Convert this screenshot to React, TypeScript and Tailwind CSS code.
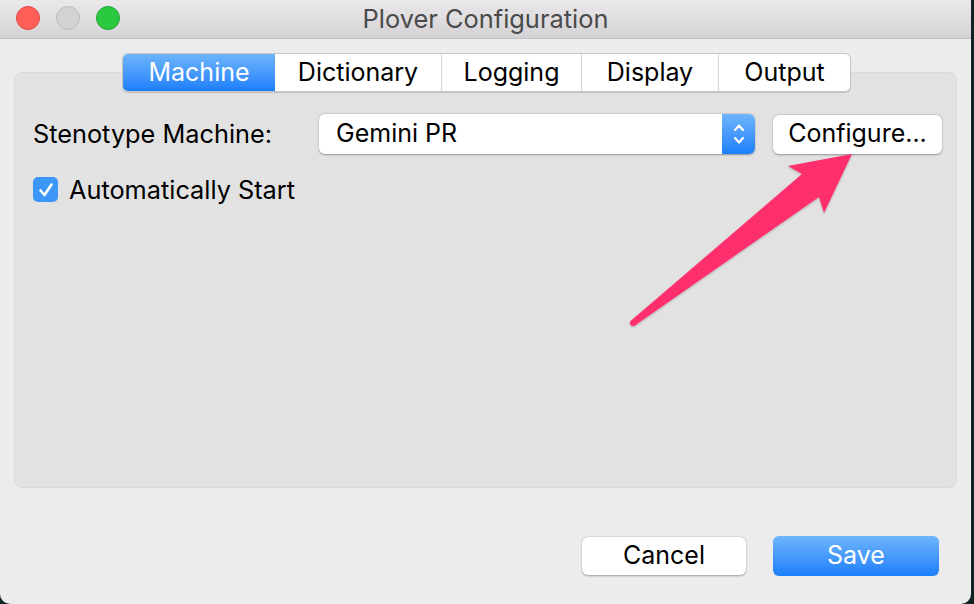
import React from "react";

const font = { fontFamily: "Inter, 'Open Sans', 'Liberation Sans', sans-serif" };

const tabs = ["Machine", "Dictionary", "Logging", "Display", "Output"];
const tabWidths = ["w-[152px]", "w-[166px]", "w-[140px]", "w-[137px]", "w-[132px]"];

const Arrow = () => (
  <svg className="pointer-events-none absolute left-0 top-0 h-[604px] w-[974px]" viewBox="0 0 974 604">
    <defs>
      <filter id="sh" x="-10%" y="-10%" width="120%" height="120%">
        <feDropShadow dx="0" dy="1" stdDeviation="1" floodColor="#000" floodOpacity="0.25" />
      </filter>
    </defs>
    <g filter="url(#sh)" fill="#ff2e6c">
      <polygon points="631.2,320.6 802,174 788,166 852,154 824,213 819,197 634.8,325.4" />
      <circle cx="633" cy="323" r="3" />
    </g>
  </svg>
);

const App = () => {
  return (
    <div className="relative h-[604px] w-[974px] overflow-hidden bg-[#0f2327]" style={font}>
      <div className="flex h-[604px] w-[971px] flex-col overflow-hidden rounded-b-[10px] bg-[#ececec]">
        {/* title bar */}
        <div className="relative flex h-[39px] shrink-0 items-center justify-center border-b border-[#c3c1c3] bg-gradient-to-b from-[#eae8ea] to-[#d4d2d4]">
          <div className="absolute left-[16px] top-[6px] flex gap-[16px]">
            <span className="h-[24px] w-[24px] rounded-full border border-[#e2463f] bg-[#fe5f57]" />
            <span className="h-[24px] w-[24px] rounded-full border border-[#bdbdbd] bg-[#d2d2d2]" />
            <span className="h-[24px] w-[24px] rounded-full border border-[#1ea932] bg-[#2ac940]" />
          </div>
          <span className="text-[25.4px] text-[#4a4a4a]">Plover Configuration</span>
        </div>

        {/* tabs */}
        <div className="relative z-10 mt-[14px] flex justify-center pl-[2px]">
          <div className="flex h-[39px] overflow-hidden rounded-[6px] border border-[#c6c6c6] bg-white shadow-[0_1px_1px_rgba(0,0,0,0.15)]">
            {tabs.map((t, i) => (
              <div
                key={t}
                className={`${tabWidths[i]} flex items-center justify-center text-[25px] ${
                  i === 0
                    ? "bg-gradient-to-b from-[#6db4fa] to-[#1a7ffb] text-white"
                    : "text-black"
                } ${i > 1 ? "border-l border-[#d6d6d6]" : ""}`}
              >
                {t}
              </div>
            ))}
          </div>
        </div>

        {/* group box */}
        <div className="mx-[14px] -mt-[20px] flex h-[416px] flex-col gap-[17px] rounded-[8px] border border-[#dadada] bg-[#e2e2e2] pl-[18px] pr-[14px] pt-[41px]">
          <div className="flex items-center">
            <span className="w-[286px] text-[25.3px] text-black">Stenotype Machine:</span>
            <div className="flex h-[40px] w-[436px] overflow-hidden rounded-[6px] bg-white shadow-[0_0.5px_2px_rgba(0,0,0,0.35)]">
              <span className="flex flex-1 items-center pl-[17px] text-[25px] text-black">Gemini PR</span>
              <div className="flex w-[33px] flex-col items-center justify-center bg-gradient-to-b from-[#6db4fa] to-[#1a7ffb]">
                <svg width="14" height="26" viewBox="0 0 14 26" fill="none" stroke="white" strokeWidth="2.2" strokeLinecap="round" strokeLinejoin="round">
                  <path d="M3 9 L7 4.5 L11 9" />
                  <path d="M3 17 L7 21.5 L11 17" />
                </svg>
              </div>
            </div>
            <div className="ml-[18px] flex h-[39px] w-[169px] items-center justify-center rounded-[6px] bg-white text-[25px] text-black shadow-[0_0.5px_2px_rgba(0,0,0,0.35)]">
              Configure...
            </div>
          </div>
          <div className="flex items-center gap-[11px]">
            <div className="flex h-[25px] w-[25px] items-center justify-center rounded-[5px] bg-[#3d97f8]">
              <svg width="18" height="18" viewBox="0 0 18 18" fill="none" stroke="white" strokeWidth="2.6" strokeLinecap="round" strokeLinejoin="round">
                <path d="M3.5 9.5 L7.5 14 L14.5 3.5" />
              </svg>
            </div>
            <span className="text-[25.3px] text-black">Automatically Start</span>
          </div>
        </div>

        {/* buttons */}
        <div className="mt-[48px] flex items-center justify-end gap-[27px] pr-[32px]">
          <div className="flex h-[38px] w-[164px] items-center justify-center rounded-[6px] bg-white text-[25px] text-black shadow-[0_0.5px_2px_rgba(0,0,0,0.35)]">
            Cancel
          </div>
          <div className="flex h-[40px] w-[166px] items-center justify-center rounded-[6px] bg-gradient-to-b from-[#6db4fa] to-[#1a7ffb] text-[25px] text-white">
            Save
          </div>
        </div>
      </div>
      <Arrow />
    </div>
  );
};

export default App;
